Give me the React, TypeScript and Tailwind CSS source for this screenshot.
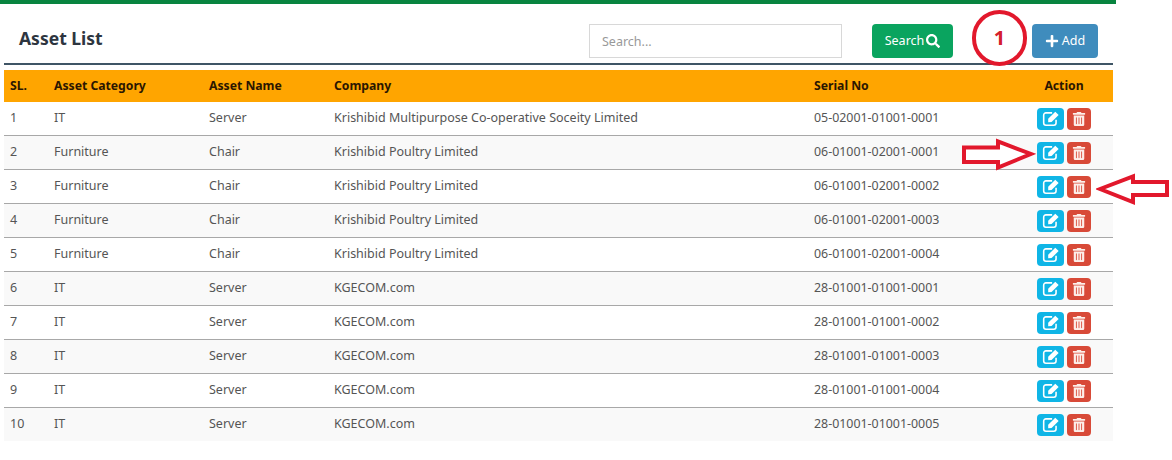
import { FaPlus, FaSearch, FaTrashAlt } from 'react-icons/fa'

const krishibid = 'Krishibid Poultry Limited'

const rows = [
  ['1', 'IT', 'Server', 'Krishibid Multipurpose Co-operative Soceity Limited', '05-02001-01001-0001'],
  ['2', 'Furniture', 'Chair', krishibid, '06-01001-02001-0001'],
  ['3', 'Furniture', 'Chair', krishibid, '06-01001-02001-0002'],
  ['4', 'Furniture', 'Chair', krishibid, '06-01001-02001-0003'],
  ['5', 'Furniture', 'Chair', krishibid, '06-01001-02001-0004'],
  ['6', 'IT', 'Server', 'KGECOM.com', '28-01001-01001-0001'],
  ['7', 'IT', 'Server', 'KGECOM.com', '28-01001-01001-0002'],
  ['8', 'IT', 'Server', 'KGECOM.com', '28-01001-01001-0003'],
  ['9', 'IT', 'Server', 'KGECOM.com', '28-01001-01001-0004'],
  ['10', 'IT', 'Server', 'KGECOM.com', '28-01001-01001-0005'],
]

// square outline with a solid pencil, like the old font-awesome edit glyph
function EditIcon() {
  return (
    <svg width="18" height="17" viewBox="0 0 16 15" fill="none">
      <path d="M9 2.5H3.5A2 2 0 0 0 1.5 4.5V11.5A2 2 0 0 0 3.5 13.5H10.5A2 2 0 0 0 12.5 11.5V8.5" stroke="currentColor" strokeWidth="1.4" />
      <path d="M5.5 7.8L11.8 1.5L14.8 4.4L8.5 10.7L5.5 10.8Z" fill="currentColor" />
    </svg>
  )
}

function RowActions() {
  return (
    <div className="mt-[1px] flex items-center justify-center gap-[3px]">
      <button className="flex h-[22px] w-[27px] items-center justify-center rounded-[4px] bg-[#0fb5e6] text-white">
        <EditIcon />
      </button>
      <button className="flex h-[22px] w-[24px] items-center justify-center rounded-[4px] bg-[#d84a38] text-[#fdeee9]">
        <FaTrashAlt className="h-[14px] w-[14px]" />
      </button>
    </div>
  )
}

function Annotations() {
  return (
    <>
      <div className="absolute left-[972px] top-[10px] flex h-[56px] w-[55px] items-center justify-center rounded-full border-[4px] border-[#e2182c] text-[20px] font-bold text-[#d4202c]">
        1
      </div>
      <svg className="absolute left-[960px] top-[138px]" width="76" height="34" viewBox="0 0 76 34" fill="none">
        <path d="M4 9.5H38V3.5L71 16L38 29.5V24H4Z" stroke="#e2182c" strokeWidth="4" fill="#fff" />
      </svg>
      <svg className="absolute left-[1096px] top-[173px]" width="76" height="34" viewBox="0 0 76 34" fill="none">
        <path d="M71 9H37V3.5L4 16L37 29V22H71Z" stroke="#e2182c" strokeWidth="4" fill="#fff" />
      </svg>
    </>
  )
}

export default function App() {
  return (
    <div className="relative h-[460px] w-[1172px] overflow-hidden bg-white font-['Noto_Sans','Open_Sans',sans-serif] text-[12.5px] text-[#555]">
      <div className="h-[4px] w-[1116px] bg-[#08843f]" />

      <div className="ml-[4px] flex h-[61px] w-[1109px] items-start border-b-[2px] border-[#3f5565] pt-[20px]">
        <h1 className="ml-[15px] w-[90px] text-[17.5px] font-bold leading-[29px] text-[#2d3540]">Asset List</h1>
        <input
          placeholder="Search..."
          className="ml-[480px] h-[34px] w-[253px] border border-[#d8d8d8] bg-white px-[12px] text-[12.5px] outline-none placeholder:text-[#999]"
        />
        <button className="ml-[30px] flex h-[34px] w-[81px] items-center justify-center gap-[2px] rounded-[4px] bg-[#0aa45f] text-[12.5px] text-white">
          Search <FaSearch className="h-[14px] w-[14px]" />
        </button>
        <button className="ml-[79px] flex h-[34px] w-[66px] items-center justify-center gap-[3px] rounded-[4px] bg-[#3f8cbd] text-[12.5px] text-white">
          <FaPlus className="h-[14px] w-[14px]" /> Add
        </button>
      </div>

      <table className="ml-[4px] mt-[5px] w-[1109px] table-fixed border-collapse">
        <colgroup>
          <col className="w-[44px]" />
          <col className="w-[155px]" />
          <col className="w-[125px]" />
          <col className="w-[480px]" />
          <col className="w-[207px]" />
          <col className="w-[98px]" />
        </colgroup>
        <thead>
          <tr className="h-[32px] bg-[#ffa500] text-left text-[12.2px] text-[#2b1600]">
            <th className="pl-[6px] font-bold">SL.</th>
            <th className="pl-[6px] font-bold">Asset Category</th>
            <th className="pl-[6px] font-bold">Asset Name</th>
            <th className="pl-[6px] font-bold">Company</th>
            <th className="pl-[6px] font-bold">Serial No</th>
            <th className="text-center font-bold">Action</th>
          </tr>
        </thead>
        <tbody>
          {rows.map((row, i) => (
            <tr key={row[0]} className={`${i === 0 ? 'h-[33px]' : 'h-[34px]'} ${i < 9 ? 'border-b border-[#a8a8a8]' : ''} ${i % 2 === 1 ? 'bg-[#f9f9f9]' : 'bg-white'}`}>
              {row.map((cell, j) => (
                <td key={j} className={j === 4 ? 'pl-[6px] text-[12.4px]' : 'pl-[6px]'}>
                  {cell}
                </td>
              ))}
              <td>
                <RowActions />
              </td>
            </tr>
          ))}
        </tbody>
      </table>

      <Annotations />
    </div>
  )
}
